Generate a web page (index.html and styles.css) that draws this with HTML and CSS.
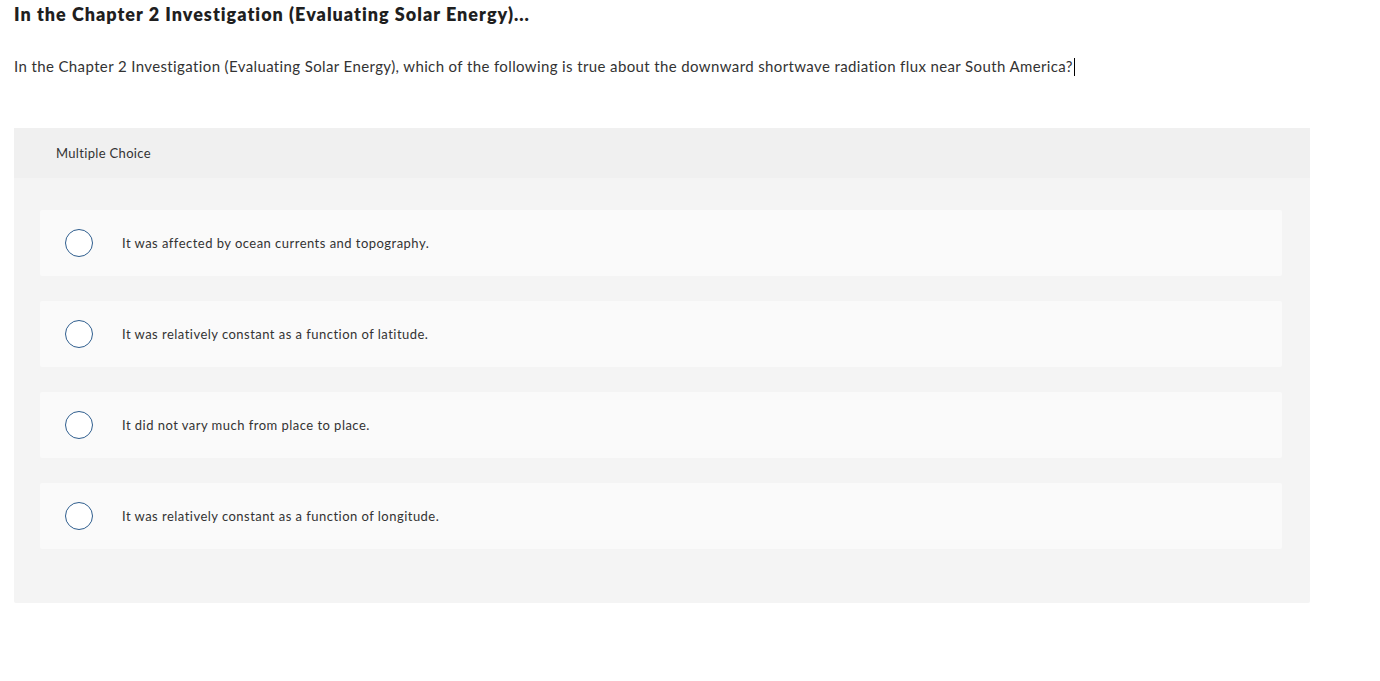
FILE: index.html
```html
<!DOCTYPE html>
<html>
<head>
<meta charset="utf-8">
<link rel="stylesheet" href="styles.css">
</head>
<body>
<div class="page">
  <h1 class="title">In the Chapter 2 Investigation (Evaluating Solar Energy)...</h1>
  <p class="prompt">In the Chapter 2 Investigation (Evaluating Solar Energy), which of the following is true about the downward shortwave radiation flux near South America?<span class="caret"></span></p>
  <div class="card">
    <div class="card-head">Multiple Choice</div>
    <div class="card-body">
      <div class="option"><span class="radio"></span><span class="label">It was affected by ocean currents and topography.</span></div>
      <div class="option"><span class="radio"></span><span class="label">It was relatively constant as a function of latitude.</span></div>
      <div class="option"><span class="radio"></span><span class="label">It did not vary much from place to place.</span></div>
      <div class="option"><span class="radio"></span><span class="label">It was relatively constant as a function of longitude.</span></div>
    </div>
  </div>
</div>
</body>
</html>
```

FILE: styles.css
```css
html, body {
  margin: 0;
  padding: 0;
  background: #ffffff;
}
body {
  font-family: "Lato", "Liberation Sans", sans-serif;
  color: #333333;
}
.page {
  padding: 3px 70px 0 14px;
}
.title {
  margin: 0;
  font-size: 18px;
  font-weight: 800;
  line-height: 22px;
  letter-spacing: 1px;
  color: #1f1f1f;
}
.prompt {
  margin: 31px 0 0 0;
  font-size: 15px;
  line-height: 20px;
  letter-spacing: 0.38px;
  color: #333333;
}
.caret {
  display: inline-block;
  width: 1px;
  height: 18px;
  background: #000;
  vertical-align: -4px;
  margin-left: 1px;
}
.card {
  margin-top: 52px;
  width: 1296px;
  background: #f4f4f4;
  border-radius: 2px;
}
.card-head {
  height: 50px;
  background: #f0f0f0;
  display: flex;
  align-items: center;
  padding-left: 42px;
  font-size: 13px;
  letter-spacing: 0.33px;
  color: #333;
}
.card-body {
  padding: 32px 28px 54px 26px;
  display: flex;
  flex-direction: column;
  gap: 25px;
}
.option {
  height: 66px;
  background: #fafafa;
  border-radius: 2px;
  display: flex;
  align-items: center;
}
.radio {
  width: 26px;
  height: 26px;
  border: 1.5px solid #2f5e8e;
  border-radius: 50%;
  margin-left: 25px;
  background: #fff;
  flex: none;
}
.label {
  margin-left: 29px;
  font-size: 13px;
  letter-spacing: 0.47px;
  color: #333;
}
```
